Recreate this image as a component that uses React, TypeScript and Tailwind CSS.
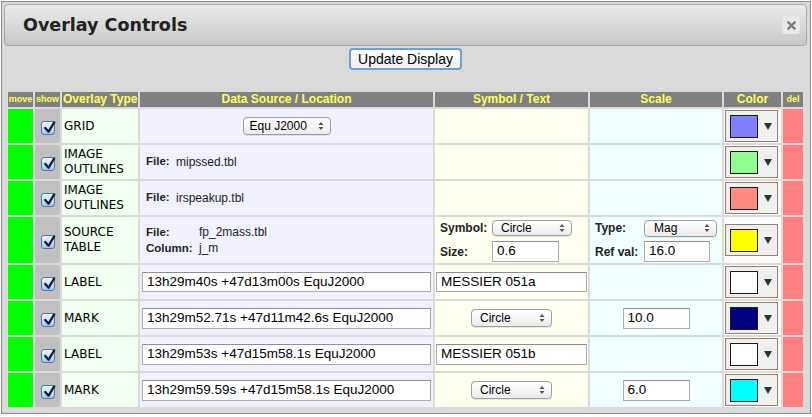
import React from 'react'

const verdana = { fontFamily: '"DejaVu Sans", Verdana, sans-serif' }
const helv = { fontFamily: '"Liberation Sans", Arial, sans-serif' }

type Row = {
  type: string[]
  swatch: string
  data: React.ReactNode
  symbol: React.ReactNode
  scale: React.ReactNode
  tall?: boolean
}

function Check() {
  return (
    <span className="relative inline-block w-[14px] h-[14px] rounded-[3px] border border-[#5678a8] bg-gradient-to-b from-[#f2f8ff] to-[#9ec4ef] align-middle">
      <svg viewBox="0 0 16 16" className="absolute left-[0px] top-[-2px] w-[15px] h-[15px] overflow-visible">
        <path d="M3.5 8.5 L7 12.5 L13 2.5" stroke="#0d1b36" strokeWidth="2.4" fill="none" strokeLinecap="round" strokeLinejoin="round" />
      </svg>
    </span>
  )
}

function Arrows() {
  return (
    <svg viewBox="0 0 6 10" className="w-[6px] h-[10px]">
      <path d="M0.5 4 L3 1 L5.5 4 Z" fill="#555" />
      <path d="M0.5 6 L3 9 L5.5 6 Z" fill="#555" />
    </svg>
  )
}

function Select({ label, className }: { label: string; className: string }) {
  return (
    <div
      className={`flex items-center justify-between rounded-[4px] border border-[#9d9d9d] bg-gradient-to-b from-white to-[#ececec] pr-[6px] text-[12px] text-black shadow-[0_1px_0_rgba(0,0,0,0.08)] ${className}`}
      style={helv}
    >
      <span>{label}</span>
      <Arrows />
    </div>
  )
}

function Input({ value, className }: { value: string; className: string }) {
  return (
    <div
      className={`flex items-center border border-[#ababab] border-t-[#8e8e8e] bg-white pl-[4px] text-[13.5px] text-black ${className}`}
      style={helv}
    >
      {value}
    </div>
  )
}

function Label({ children }: { children: React.ReactNode }) {
  return <span className="text-[12px] font-bold text-[#222]" style={helv}>{children}</span>
}

const rows: Row[] = [
  {
    type: ['GRID'],
    swatch: 'bg-[#8080ff]',
    data: (
      <div className="flex justify-center">
        <Select label="Equ J2000" className="w-[88px] h-[18px] pl-[6px]" />
      </div>
    ),
    symbol: null,
    scale: null,
  },
  {
    type: ['IMAGE', 'OUTLINES'],
    swatch: 'bg-[#90ff90]',
    data: (
      <div className="flex items-center pl-[6px]" style={helv}>
        <span className="text-[11.5px] font-bold text-[#222] w-[30px]">File:</span>
        <span className="text-[12px] text-[#222]">mipssed.tbl</span>
      </div>
    ),
    symbol: null,
    scale: null,
  },
  {
    type: ['IMAGE', 'OUTLINES'],
    swatch: 'bg-[#ff8a80]',
    data: (
      <div className="flex items-center pl-[6px]" style={helv}>
        <span className="text-[11.5px] font-bold text-[#222] w-[30px]">File:</span>
        <span className="text-[12px] text-[#222]">irspeakup.tbl</span>
      </div>
    ),
    symbol: null,
    scale: null,
  },
  {
    type: ['SOURCE', 'TABLE'],
    swatch: 'bg-[#ffff00]',
    tall: true,
    data: (
      <div className="grid grid-cols-[53px_1fr] gap-y-[1px] pl-[6px] leading-[15px]" style={helv}>
        <span className="text-[11.5px] font-bold text-[#222]">File:</span>
        <span className="text-[12px] text-[#222]">fp_2mass.tbl</span>
        <span className="text-[11.5px] font-bold text-[#222]">Column:</span>
        <span className="text-[12px] text-[#222]">j_m</span>
      </div>
    ),
    symbol: (
      <div className="grid grid-cols-[52px_auto] items-center gap-y-[4px] pl-[5px] pt-[1px]">
        <Label>Symbol:</Label>
        <Select label="Circle" className="w-[80px] h-[16px] pl-[8px]" />
        <Label>Size:</Label>
        <Input value="0.6" className="w-[67px] h-[21px]" />
      </div>
    ),
    scale: (
      <div className="grid grid-cols-[49px_auto] items-center gap-y-[4px] pl-[5px] pt-[1px]">
        <Label>Type:</Label>
        <Select label="Mag" className="w-[73px] h-[17px] pl-[9px]" />
        <Label>Ref val:</Label>
        <Input value="16.0" className="w-[66px] h-[21px]" />
      </div>
    ),
  },
  {
    type: ['LABEL'],
    swatch: 'bg-white',
    data: <Input value="13h29m40s +47d13m00s EquJ2000" className="mx-[2px] h-[20px]" />,
    symbol: <Input value="MESSIER 051a" className="mx-[1px] h-[20px]" />,
    scale: null,
  },
  {
    type: ['MARK'],
    swatch: 'bg-[#000080]',
    data: <Input value="13h29m52.71s +47d11m42.6s EquJ2000" className="mx-[2px] h-[21px]" />,
    symbol: (
      <div className="flex justify-center">
        <Select label="Circle" className="w-[81px] h-[18px] pl-[8px]" />
      </div>
    ),
    scale: (
      <div className="flex justify-center">
        <Input value="10.0" className="w-[67px] h-[21px]" />
      </div>
    ),
  },
  {
    type: ['LABEL'],
    swatch: 'bg-white',
    data: <Input value="13h29m53s +47d15m58.1s EquJ2000" className="mx-[2px] h-[21px]" />,
    symbol: <Input value="MESSIER 051b" className="mx-[1px] h-[21px]" />,
    scale: null,
  },
  {
    type: ['MARK'],
    swatch: 'bg-[#00ffff]',
    data: <Input value="13h29m59.59s +47d15m58.1s EquJ2000" className="mx-[2px] h-[21px]" />,
    symbol: (
      <div className="flex justify-center">
        <Select label="Circle" className="w-[81px] h-[18px] pl-[8px]" />
      </div>
    ),
    scale: (
      <div className="flex justify-center">
        <Input value="6.0" className="w-[67px] h-[21px]" />
      </div>
    ),
  },
]

export default function App() {
  return (
    <div className="w-[812px] h-[417px] bg-white">
      <div className="ml-[1px] mt-[1px] w-[810px] h-[413px] border border-[#8c8c8c] bg-[#dadada] pt-[2px] pl-[2px] pr-[3px]">
        <div className="flex items-center justify-between h-[42px] rounded-[4px] border border-[#a9a9a9] bg-gradient-to-b from-[#ebebeb] to-[#c8c8c8] pl-[18px] pr-[6px]">
          <h1 className="text-[17.5px] font-bold text-[#222]" style={verdana}>Overlay Controls</h1>
          <div className="flex items-center justify-center w-[18px] h-[18px] rounded-[3px] bg-[#e9e9e9]">
            <svg viewBox="0 0 10 10" className="w-[9px] h-[9px]">
              <path d="M1.5 1.5 L8.5 8.5 M8.5 1.5 L1.5 8.5" stroke="#7a7a7a" strokeWidth="2.6" strokeLinecap="round" />
            </svg>
          </div>
        </div>

        <div className="flex justify-center pt-[2px]">
          <button
            className="h-[22px] px-[7px] rounded-[4px] border-2 border-[#6e9fdd] bg-gradient-to-b from-white to-[#f0f0f0] text-[14px] text-black leading-none"
            style={helv}
          >
            Update Display
          </button>
        </div>

        <table className="mt-[20px] ml-[2px] w-[799px] table-fixed border-separate border-spacing-[2px]">
          <colgroup>
            <col className="w-[25px]" />
            <col className="w-[25px]" />
            <col className="w-[76px]" />
            <col className="w-[293px]" />
            <col className="w-[153px]" />
            <col className="w-[132px]" />
            <col className="w-[57px]" />
            <col className="w-[20px]" />
          </colgroup>
          <thead>
            <tr className="bg-[#808080] text-[#ffff5e] font-bold h-[15px]" style={helv}>
              <th className="p-0 text-[9px] leading-[15px]">move</th>
              <th className="p-0 text-[9px] leading-[15px]">show</th>
              <th className="p-0 text-[12px] leading-[15px] text-left pl-[1px] whitespace-nowrap">Overlay Type</th>
              <th className="p-0 text-[12px] leading-[15px]">Data Source / Location</th>
              <th className="p-0 text-[12px] leading-[15px]">Symbol / Text</th>
              <th className="p-0 text-[12px] leading-[15px]">Scale</th>
              <th className="p-0 text-[12px] leading-[15px]">Color</th>
              <th className="p-0 text-[9px] leading-[15px]">del</th>
            </tr>
          </thead>
          <tbody>
            {rows.map((r, i) => (
              <tr key={i} className={r.tall ? 'h-[46px]' : 'h-[34px]'}>
                <td className="p-0 bg-[#00ff00]" />
                <td className="p-0 bg-[#c0c0c0] text-center">
                  <Check />
                </td>
                <td className="p-0 pl-[2px] bg-[#f0fff0] text-[12px] leading-[15px] text-black" style={verdana}>
                  {r.type.map((t) => (
                    <div key={t}>{t}</div>
                  ))}
                </td>
                <td className="p-0 bg-[#f0f0ff]">{r.data}</td>
                <td className="p-0 bg-[#fffff0]">{r.symbol}</td>
                <td className="p-0 bg-[#f0ffff]">{r.scale}</td>
                <td className="p-0 bg-white">
                  <div className="ml-[1px] w-[53px] h-[32px] border border-[#9c7e65] bg-[#efefef] flex items-center pl-[4px]">
                    <div className={`w-[28px] h-[23px] border border-[#1e1e1e] ${r.swatch}`} />
                    <svg viewBox="0 0 8 7" className="ml-[6px] w-[8px] h-[7px]">
                      <path d="M0 0 H8 L4 7 Z" fill="#333" />
                    </svg>
                  </div>
                </td>
                <td className="p-0 bg-[#ff8080]" />
              </tr>
            ))}
          </tbody>
        </table>
      </div>
    </div>
  )
}
